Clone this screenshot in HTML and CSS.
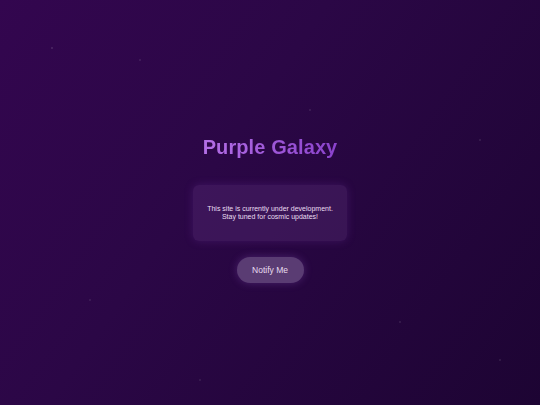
FILE: index.html
```html
<!DOCTYPE html>
<html>
<head>
<meta charset="utf-8">
<link rel="stylesheet" href="styles.css">
</head>
<body>
<main class="page">
  <h1 class="title">Purple Galaxy</h1>
  <div class="card">
    <p class="msg">This site is currently under development.<br>Stay tuned for cosmic updates!</p>
  </div>
  <button class="notify">Notify Me</button>
</main>
</body>
</html>
```
FILE: styles.css
```css
html, body {
  margin: 0;
  padding: 0;
  height: 100%;
}
body {
  font-family: "Liberation Sans", Arial, sans-serif;
  background-color: #280742;
  background-image:
    radial-gradient(circle at 52px 48px, rgba(255,255,255,0.10) 0.8px, transparent 1.3px),
    radial-gradient(circle at 140px 60px, rgba(255,255,255,0.08) 0.8px, transparent 1.3px),
    radial-gradient(circle at 310px 110px, rgba(255,255,255,0.08) 0.8px, transparent 1.3px),
    radial-gradient(circle at 480px 140px, rgba(255,255,255,0.08) 0.8px, transparent 1.3px),
    radial-gradient(circle at 400px 322px, rgba(255,255,255,0.08) 0.8px, transparent 1.3px),
    radial-gradient(circle at 500px 360px, rgba(255,255,255,0.08) 0.8px, transparent 1.3px),
    radial-gradient(circle at 90px 300px, rgba(255,255,255,0.07) 0.8px, transparent 1.3px),
    radial-gradient(circle at 200px 380px, rgba(255,255,255,0.07) 0.8px, transparent 1.3px),
    linear-gradient(125deg, #33064f 0%, #2b0746 40%, #1d0433 100%);
  color: #e6d6f2;
}
.page {
  height: 405px;
  display: flex;
  flex-direction: column;
  align-items: center;
  padding-top: 134px;
  box-sizing: border-box;
}
.title {
  margin: 0;
  font-size: 20px;
  line-height: 26px;
  font-weight: bold;
  letter-spacing: 0.1px;
  background: linear-gradient(90deg, #b46fe6, #8a42cc);
  -webkit-background-clip: text;
  background-clip: text;
  color: transparent;
}
.card {
  margin-top: 25px;
  width: 154px;
  height: 56px;
  box-sizing: border-box;
  display: flex;
  align-items: center;
  justify-content: center;
  border-radius: 6px;
  background: rgba(170, 110, 210, 0.15);
  box-shadow: 0 0 10px rgba(140, 70, 200, 0.22);
}
.msg {
  margin: 0;
  font-size: 7px;
  line-height: 8px;
  text-align: center;
  color: #eadff2;
}
.notify {
  margin-top: 16px;
  width: 67px;
  height: 26px;
  border: none;
  border-radius: 13px;
  background: #5a3c73;
  color: #e8dcf0;
  font-family: "Liberation Sans", Arial, sans-serif;
  font-size: 8.5px;
  padding: 0;
  box-shadow: 0 0 8px rgba(150, 90, 200, 0.32);
}
```
